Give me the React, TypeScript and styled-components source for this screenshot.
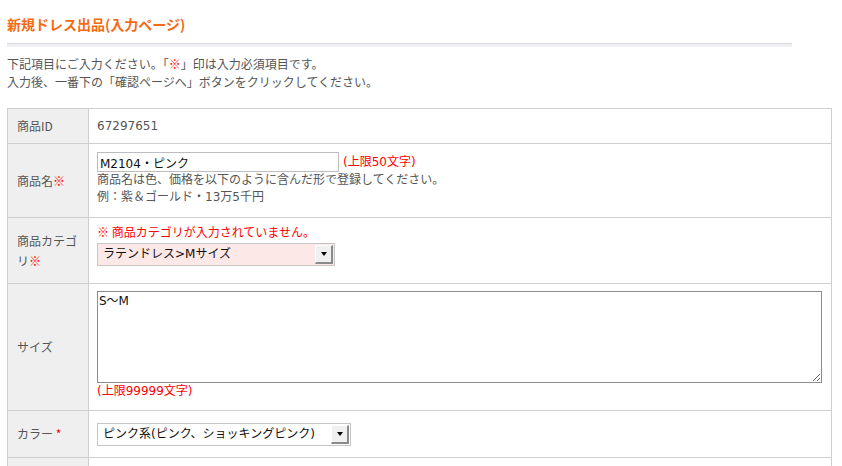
import React from "react";
import styled, { createGlobalStyle } from "styled-components";

const Global = createGlobalStyle`
  html, body { margin: 0; padding: 0; background: #fff; }
  body { font-family: "DejaVu Sans", "Noto Sans CJK JP", sans-serif; color: #555; }
`;

const Page = styled.div`
  padding: 14px 10px 0 7px;
  width: 825px;
`;

const Title = styled.h1`
  margin: 0;
  font-size: 14px;
  line-height: 20px;
  font-weight: bold;
  color: #f56a12;
  font-family: "Noto Sans CJK JP", sans-serif;
`;

const Divider = styled.div`
  margin-top: 9px;
  width: 785px;
  height: 3px;
  border-top: 1px solid #d9d9dd;
  background: #eef0f3;
`;

const Intro = styled.p`
  margin: 8px 0 0;
  font-size: 12px;
  line-height: 18px;
  color: #555;
  font-family: "Noto Sans CJK JP", sans-serif;
`;

const Red = styled.span`
  color: #f00;
`;

const Table = styled.div`
  margin-top: 17px;
  border-top: 1px solid #cfcfcf;
  border-left: 1px solid #cfcfcf;
  border-right: 1px solid #cfcfcf;
  width: 823px;
`;

const Row = styled.div<{ $h: number }>`
  display: grid;
  grid-template-columns: 81px 1fr;
  min-height: ${(p) => p.$h}px;
  border-bottom: 1px solid #cfcfcf;
  box-sizing: border-box;
`;

const Label = styled.div`
  background: #efefef;
  border-right: 1px solid #cfcfcf;
  padding: 0 9px;
  display: flex;
  align-items: center;
  font-size: 12px;
  line-height: 20px;
  color: #555;
  font-family: "Noto Sans CJK JP", sans-serif;
`;

const Value = styled.div<{ $pt?: number; $center?: boolean }>`
  padding: ${(p) => p.$pt ?? 8}px 8px 0 8px;
  display: flex;
  flex-direction: column;
  justify-content: ${(p) => (p.$center ? "center" : "flex-start")};
  font-size: 12px;
  line-height: 17px;
  color: #555;
  ${(p) => (p.$center ? "padding-top: 0;" : "")}
`;

const Inline = styled.div`
  display: flex;
  align-items: center;
  gap: 4px;
`;

const TextInput = styled.input`
  box-sizing: border-box;
  width: 242px;
  height: 20px;
  border: 1px solid #bdbdbd;
  padding: 0 2px;
  font-size: 12px;
  color: #111;
  font-family: "DejaVu Sans", "Noto Sans CJK JP", sans-serif;
  outline: none;
  background: #fff;
`;

const Limit = styled.span`
  color: #f00;
  font-size: 12px;
  font-family: "DejaVu Sans", "Noto Sans CJK JP", sans-serif;
`;

const Help = styled.div`
  font-family: "DejaVu Sans", "Noto Sans CJK JP", sans-serif;
  color: #555;
`;

const Error = styled.div`
  color: #f00;
  font-size: 12px;
  line-height: 20px;
  font-family: "Noto Sans CJK JP", sans-serif;
`;

const SelectBox = styled.div<{ $w: number; $bg?: string }>`
  box-sizing: border-box;
  width: ${(p) => p.$w}px;
  height: 23px;
  border: 1px solid #c6c6c6;
  background: ${(p) => p.$bg ?? "#fff"};
  display: flex;
  align-items: stretch;
  margin-top: 1px;
`;

const SelectText = styled.span`
  flex: 1;
  padding-left: 5px;
  display: flex;
  align-items: center;
  font-size: 12px;
  color: #111;
  font-family: "DejaVu Sans", "Noto Sans CJK JP", sans-serif;
`;

const ArrowButton = styled.span`
  width: 15px;
  margin: 1px;
  background: #f0f0f0;
  border-top: 1px solid #fff;
  border-left: 1px solid #fff;
  border-right: 2px solid #8a8a8a;
  border-bottom: 2px solid #8a8a8a;
  display: flex;
  align-items: center;
  justify-content: center;
  &::after {
    content: "";
    border-left: 3px solid transparent;
    border-right: 3px solid transparent;
    border-top: 4px solid #000;
  }
`;

const TextArea = styled.textarea`
  box-sizing: border-box;
  width: 725px;
  height: 92px;
  border: 1px solid #8c8c8c;
  padding: 1px 1px;
  font-size: 12px;
  line-height: 16px;
  color: #111;
  font-family: "DejaVu Sans", "Noto Sans CJK JP", sans-serif;
  outline: none;
  resize: both;
  display: block;
`;

const Select = ({ w, bg, children }: { w: number; bg?: string; children: React.ReactNode }) => (
  <SelectBox $w={w} $bg={bg}>
    <SelectText>{children}</SelectText>
    <ArrowButton />
  </SelectBox>
);

export default function App() {
  return (
    <>
      <Global />
      <Page>
        <Title>新規ドレス出品(入力ページ)</Title>
        <Divider />
        <Intro>
          下記項目にご入力ください。「<Red>※</Red>」印は入力必須項目です。
          <br />
          入力後、一番下の「確認ページへ」ボタンをクリックしてください。
        </Intro>
        <Table>
          <Row $h={35}>
            <Label>商品ID</Label>
            <Value $center>67297651</Value>
          </Row>
          <Row $h={74}>
            <Label>
              <span>
                商品名<Red>※</Red>
              </span>
            </Label>
            <Value>
              <Inline>
                <TextInput defaultValue="M2104・ピンク" />
                <Limit>(上限50文字)</Limit>
              </Inline>
              <Help>商品名は色、価格を以下のように含んだ形で登録してください。</Help>
              <Help>例：紫＆ゴールド・13万5千円</Help>
            </Value>
          </Row>
          <Row $h={66}>
            <Label>
              <span>
                商品カテゴリ<Red>※</Red>
              </span>
            </Label>
            <Value $pt={4}>
              <Error>※ 商品カテゴリが入力されていません。</Error>
              <Select w={238} bg="#fde8e8">
                ラテンドレス&gt;Mサイズ
              </Select>
            </Value>
          </Row>
          <Row $h={127}>
            <Label>サイズ</Label>
            <Value $pt={7}>
              <TextArea defaultValue="S〜M" />
              <Limit>(上限99999文字)</Limit>
            </Value>
          </Row>
          <Row $h={47}>
            <Label>
              <span>
                カラー <Red>*</Red>
              </span>
            </Label>
            <Value $center>
              <Select w={254}>ピンク系(ピンク、ショッキングピンク)</Select>
            </Value>
          </Row>
          <Row $h={40}>
            <Label />
            <Value />
          </Row>
        </Table>
      </Page>
    </>
  );
}
